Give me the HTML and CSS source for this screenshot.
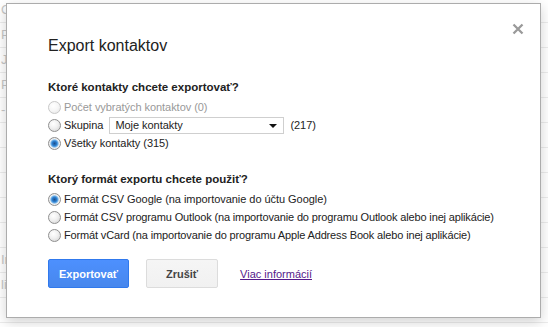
FILE: index.html
```html
<!DOCTYPE html>
<html lang="sk">
<head>
    <meta charset="UTF-8">
    <title>Export kontaktov</title>
    <link rel="stylesheet" href="styles.css">
</head>
<body>
    <div class="page">
        <div class="row">Co</div>
        <div class="row">Pr</div>
        <div class="row">Jo</div>
        <div class="row">Po</div>
        <div class="row">-</div>
        <div class="row"></div>
        <div class="row"></div>
        <div class="row"></div>
        <div class="row"></div>
        <div class="row"></div>
        <div class="row">Ir</div>
        <div class="row">lic</div>
        <div class="row"></div>
    </div>

    <div class="dialog">
        <span class="close">
            <svg width="12" height="12" viewBox="0 0 12 12">
                <path d="M1.5 1.5 L10.5 10.5 M10.5 1.5 L1.5 10.5" stroke="#9a9a9a" stroke-width="2.3" fill="none"/>
            </svg>
        </span>
        <div class="title">Export kontaktov</div>

        <div class="heading">Ktoré kontakty chcete exportovať?</div>
        <label class="option disabled"><input type="radio" name="kto" disabled> Počet vybratých kontaktov (0)</label>
        <label class="option">
            <input type="radio" name="kto"> Skupina
            <span class="select">Moje kontakty<span class="arrow"></span></span>
            (217)
        </label>
        <label class="option"><input type="radio" name="kto" checked> Všetky kontakty (315)</label>

        <div class="heading second">Ktorý formát exportu chcete použiť?</div>
        <label class="option"><input type="radio" name="format" checked> Formát CSV Google (na importovanie do účtu Google)</label>
        <label class="option long"><input type="radio" name="format"> Formát CSV programu Outlook (na importovanie do programu Outlook alebo inej aplikácie)</label>
        <label class="option long"><input type="radio" name="format"> Formát vCard (na importovanie do programu Apple Address Book alebo inej aplikácie)</label>

        <div class="buttons">
            <button type="button" class="button blue">Exportovať</button>
            <button type="button" class="button">Zrušiť</button>
            <a href="#" class="link">Viac informácií</a>
        </div>
    </div>
</body>
</html>
```

FILE: styles.css
```css
body {
    margin: 0;
    background-color: white;
    font-family: Arial, "Liberation Sans", sans-serif;
    color: #222;
}
.page {
    margin-top: -2px;
}
.row {
    height: 24px;
    line-height: 24px;
    border-bottom: 1px solid #ececec;
    color: #c6c6c6;
    font-size: 13px;
    padding-left: 1px;
}
.dialog {
    position: absolute;
    left: 6px;
    top: 3px;
    width: 535px;
    height: 315px;
    box-sizing: border-box;
    background-color: white;
    border: 1px solid #acacac;
    box-shadow: 0 4px 12px rgba(0, 0, 0, 0.18);
    padding: 0 41px;
}
.close {
    position: absolute;
    right: 16px;
    top: 17px;
}
.title {
    font-size: 16px;
    line-height: 20px;
    margin-top: 32px;
    color: #222;
}
.heading {
    font-size: 11.5px;
    font-weight: bold;
    line-height: 16px;
    margin-top: 23px;
    margin-bottom: 3px;
}
.heading.second {
    margin-top: 19px;
}
.option {
    display: flex;
    align-items: center;
    height: 18px;
    font-size: 11px;
    color: #222;
    white-space: nowrap;
    letter-spacing: -0.05px;
}
.option.long {
    letter-spacing: -0.15px;
}
.option.disabled {
    color: #999;
}
.option input {
    appearance: none;
    -webkit-appearance: none;
    flex: none;
    width: 13px;
    height: 13px;
    margin: 0 3px 0 0;
    border-radius: 50%;
    border: 1px solid #8f8f8f;
    box-sizing: border-box;
    background: radial-gradient(circle at 40% 35%, #ffffff 0%, #f0f0f0 45%, #cfcfcf 100%);
}
.option input:checked {
    background: radial-gradient(circle at 50% 50%, #1d4f8a 0%, #2c7fd0 30%, #6eb0e8 45%, #f4f4f4 60%, #d2d2d2 100%);
}
.option input:disabled {
    border-color: #c8c8c8;
    background: radial-gradient(circle at 40% 35%, #ffffff 0%, #f6f6f6 50%, #e2e2e2 100%);
}
.select {
    position: relative;
    display: inline-block;
    width: 175px;
    height: 17px;
    line-height: 15px;
    box-sizing: border-box;
    border: 1px solid #cfcfcf;
    padding-left: 5px;
    margin: 0 6px 0 6px;
    color: #222;
}
.arrow {
    position: absolute;
    right: 6px;
    top: 6px;
    border-left: 4px solid transparent;
    border-right: 4px solid transparent;
    border-top: 4px solid #111;
}
.buttons {
    display: flex;
    align-items: center;
    margin-top: 15px;
}
.button {
    height: 29px;
    min-width: 72px;
    padding: 0 10px;
    font-family: Arial, "Liberation Sans", sans-serif;
    font-size: 11px;
    font-weight: bold;
    color: #444;
    background: linear-gradient(#f5f5f5, #f1f1f1);
    border: 1px solid #dcdcdc;
    border-radius: 2px;
    margin: 0 17px 0 0;
    cursor: pointer;
}
.button.blue {
    color: white;
    background: linear-gradient(#4d90fe, #4787ed);
    border-color: #3079ed;
}
.link {
    margin-left: 5px;
    font-size: 11px;
    color: #551a8b;
}
```
